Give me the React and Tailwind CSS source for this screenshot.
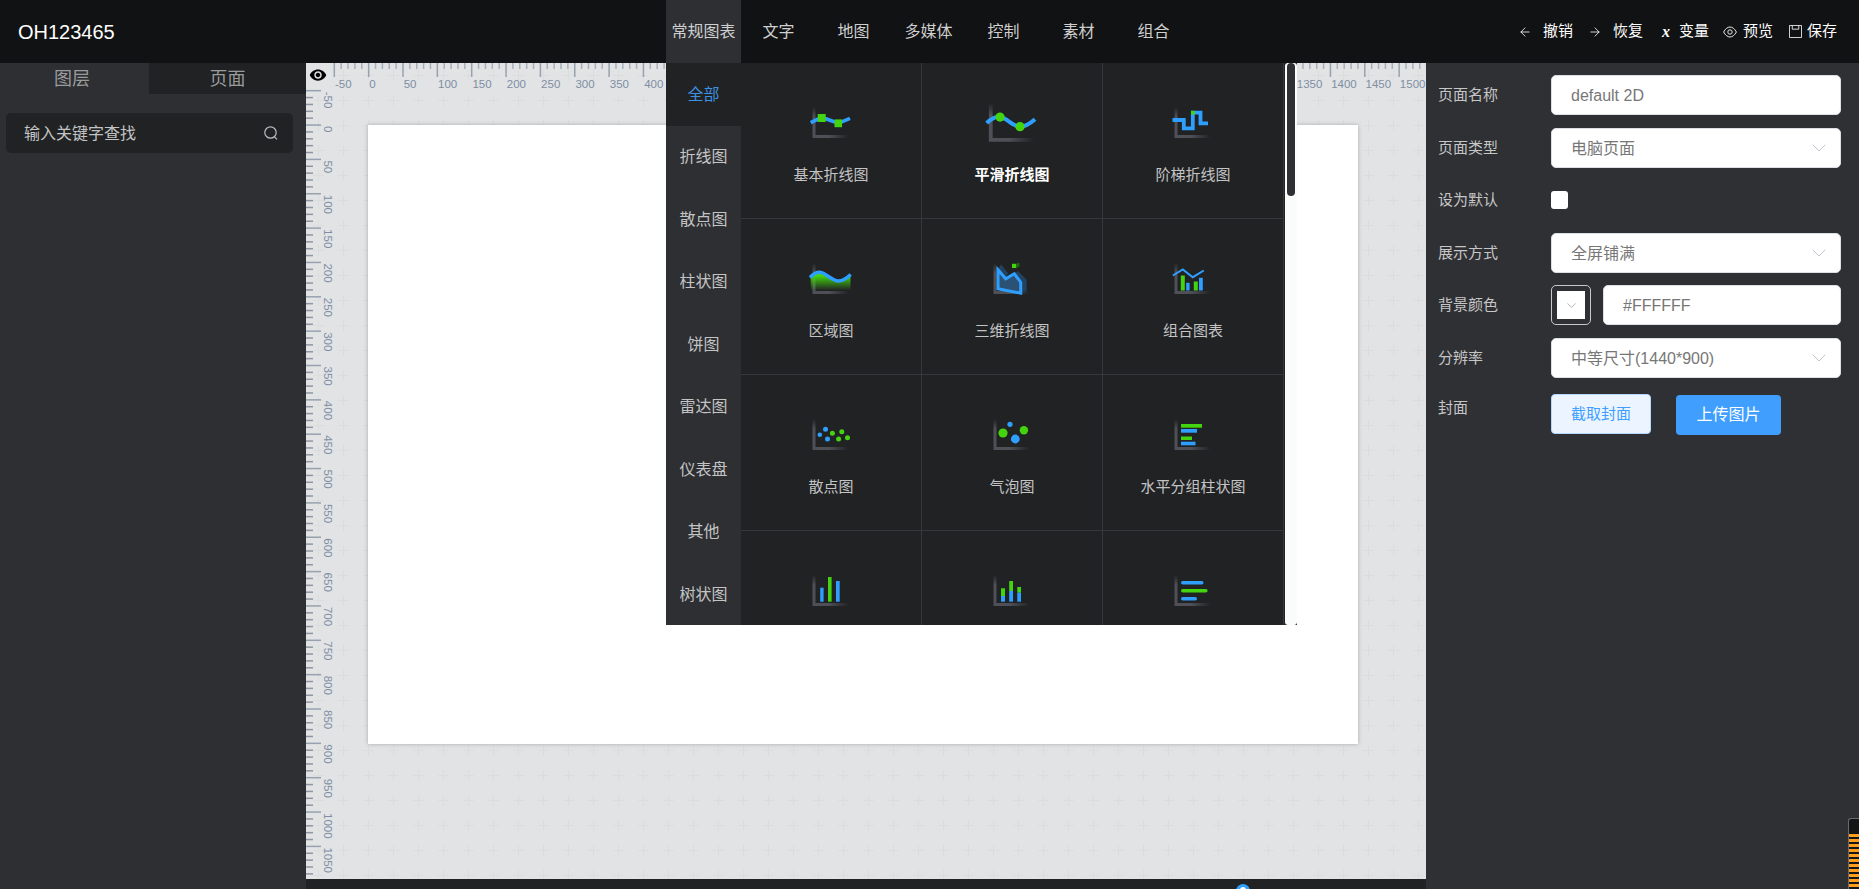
import { ArrowLeft, ArrowRight } from "lucide-react";
import { MdRemoveRedEye } from "react-icons/md";

const SANS = "font-['Liberation_Sans','Noto_Sans_CJK_SC',sans-serif]";
const BLUE = "#2f9fff";
const GREEN = "#43d40f";

const navItems = ["常规图表", "文字", "地图", "多媒体", "控制", "素材", "组合"];
const sideItems = ["全部", "折线图", "散点图", "柱状图", "饼图", "雷达图", "仪表盘", "其他", "树状图"];

const PX_PER_50 = 34.35;

function Axes() {
  return (
    <>
      <defs>
        <linearGradient id="axisV" x1="0" y1="0" x2="0" y2="1">
          <stop offset="0" stopColor="#4f5057" stopOpacity="0" />
          <stop offset="0.35" stopColor="#4f5057" />
        </linearGradient>
        <linearGradient id="axisH" x1="0" y1="0" x2="1" y2="0">
          <stop offset="0.45" stopColor="#4f5057" />
          <stop offset="1" stopColor="#4f5057" stopOpacity="0" />
        </linearGradient>
        <linearGradient id="areaFill" x1="0" y1="0" x2="0" y2="1">
          <stop offset="0.2" stopColor={GREEN} />
          <stop offset="1" stopColor={GREEN} stopOpacity="0" />
        </linearGradient>
      </defs>
      <rect x="5.5" y="8" width="3" height="28" fill="url(#axisV)" />
      <rect x="5.5" y="36" width="36" height="3" fill="url(#axisH)" />
    </>
  );
}

const icons = {
  line: (
    <>
      <path d="M3.7 23.7 14.7 18.3 31.3 24.3 43 19.3" fill="none" stroke={BLUE} strokeWidth="3.6" />
      <rect x="10.7" y="15" width="8" height="8" fill={GREEN} />
      <rect x="27.5" y="20.4" width="7.5" height="7.8" fill={GREEN} />
    </>
  ),
  smooth: (
    <>
      <path d="M3.7 24C8 20 11 18.500 14.400 19 20 20 25 27 30.400 27 35 27 39 24 42.400 21" fill="none" stroke={BLUE} strokeWidth="3.2" />
      <circle cx="14.4" cy="19.2" r="3.7" fill={GREEN} />
      <circle cx="30.4" cy="26.9" r="3.7" fill={GREEN} />
    </>
  ),
  step: (
    <>
      <path d="M3.500 21H14.800V29.300H23.800V13.700H31.500V24.300H39" fill="none" stroke={BLUE} strokeWidth="3.8" />
      <rect x="22" y="11.800" width="3.8" height="3.800" fill={GREEN} />
    </>
  ),
  area: (
    <>
      <path d="M3.500 22C7 18 10 17 13 17.200 19 18 25 26 31.300 26 36 26 40 23 43.500 20V35.500H4Z" fill="url(#areaFill)" />
      <path d="M3 22.500C7 18 10 17 13 17.200 19 18 25 26 31.300 26 36 26 40 23 43.700 19.500" fill="none" stroke={BLUE} strokeWidth="3.4" />
    </>
  ),
  line3d: (
    <>
      <path d="M10 14 13 9.500 20 18 17.700 23.800Z" fill="#24425e" />
      <path d="M26.300 18.800 30 16 38.700 24.800V35.500L32.700 38.200V27.200Z" fill="#24425e" />
      <path d="M10 14.800 17.700 23.800 26.300 18.800 32.700 27.200V38.200L10 33.800Z" fill="#2b5274" stroke={BLUE} strokeWidth="3" />
      <rect x="24" y="8.800" width="4.400" height="4.200" fill={GREEN} />
      <path d="M28.400 13V8.800L31.400 7.600V11.500Z" fill="#1f6b10" />
    </>
  ),
  combo: (
    <>
      <rect x="11.8" y="20.5" width="4" height="15" fill={GREEN} />
      <rect x="17.2" y="27.8" width="3.4" height="7.7" fill={BLUE} />
      <rect x="24.8" y="26.5" width="4" height="9" fill={GREEN} />
      <rect x="30" y="22.8" width="3.8" height="12.7" fill={BLUE} />
      <path d="M3.800 20.500 13.800 14.500 23.800 22.200 34.800 15.500" fill="none" stroke={BLUE} strokeWidth="2" />
    </>
  ),
  scatter: (
    <>
      <circle cx="12.8" cy="23.7" r="2.3" fill={BLUE} />
      <circle cx="18.5" cy="18.3" r="2.5" fill={BLUE} />
      <circle cx="20.5" cy="28" r="2.5" fill={BLUE} />
      <circle cx="25.4" cy="22.3" r="2.5" fill={GREEN} />
      <circle cx="31.6" cy="28" r="2.5" fill={GREEN} />
      <circle cx="34.8" cy="20.7" r="2.5" fill={GREEN} />
      <circle cx="40.5" cy="26.7" r="2.5" fill={GREEN} />
    </>
  ),
  bubble: (
    <>
      <circle cx="15" cy="22" r="4.6" fill={GREEN} />
      <circle cx="27.3" cy="28" r="4.4" fill={BLUE} />
      <circle cx="35.9" cy="19.3" r="4.2" fill={GREEN} />
      <circle cx="22" cy="13.3" r="2.6" fill={BLUE} />
    </>
  ),
  hgroup: (
    <>
      <rect x="12" y="13" width="21" height="3.7" fill={GREEN} />
      <rect x="12" y="18" width="16" height="3.7" fill={BLUE} />
      <rect x="12" y="25.5" width="11" height="3.5" fill={GREEN} />
      <rect x="12" y="30.7" width="14.5" height="3.6" fill={BLUE} />
    </>
  ),
  vbar: (
    <>
      <rect x="13.2" y="20.7" width="3.4" height="14" fill={BLUE} />
      <rect x="21" y="10" width="3.6" height="24.7" fill={GREEN} />
      <rect x="29" y="14" width="3.7" height="20.7" fill={BLUE} />
    </>
  ),
  vstack: (
    <>
      <rect x="13" y="21.3" width="4" height="7.7" fill={GREEN} />
      <rect x="13" y="29" width="4" height="5.7" fill={BLUE} />
      <rect x="21.2" y="14" width="3.8" height="10" fill={GREEN} />
      <rect x="21.2" y="24" width="3.8" height="10.7" fill={BLUE} />
      <rect x="29.3" y="20" width="3.7" height="5.7" fill={GREEN} />
      <rect x="29.3" y="25.7" width="3.7" height="9" fill={BLUE} />
    </>
  ),
  hround: (
    <>
      <rect x="12" y="14" width="22.5" height="3.4" rx="1.7" fill={BLUE} />
      <rect x="12" y="22" width="26.6" height="3.6" rx="1.8" fill={GREEN} />
      <rect x="12" y="30" width="16" height="3.6" rx="1.8" fill={BLUE} />
    </>
  ),
};

const charts = [
  { icon: "line", label: "基本折线图" },
  { icon: "smooth", label: "平滑折线图", hover: true },
  { icon: "step", label: "阶梯折线图" },
  { icon: "area", label: "区域图" },
  { icon: "line3d", label: "三维折线图" },
  { icon: "combo", label: "组合图表" },
  { icon: "scatter", label: "散点图" },
  { icon: "bubble", label: "气泡图" },
  { icon: "hgroup", label: "水平分组柱状图" },
  { icon: "vbar", label: "" },
  { icon: "vstack", label: "" },
  { icon: "hround", label: "" },
];

function ChartCell({ icon, label, hover }) {
  return (
    <div className="h-[156px] shrink-0 border-r border-b border-[#36383c] flex flex-col items-center pt-[36px]">
      <svg viewBox="0 0 48 48" className={`w-12 h-12 shrink-0 overflow-visible ${hover ? "scale-125" : ""}`}>
        <Axes />
        {icons[icon]}
      </svg>
      <span className={`mt-[17px] text-[15px] leading-[22px] ${hover ? "font-bold text-white" : "text-[#c4c4c4]"}`}>
        {label}
      </span>
    </div>
  );
}

function Chevron({ className, color = "#c0c4cc" }) {
  return (
    <svg viewBox="0 0 14 8" className={className} fill="none" stroke={color} strokeWidth="1">
      <path d="M.7.7 7 7 13.300.7" />
    </svg>
  );
}

function Field({ label, children, className = "" }) {
  return (
    <div className={`flex items-center ${className}`}>
      <span className="w-[113px] shrink-0 text-[15px] text-[#c6c6c6]">{label}</span>
      {children}
    </div>
  );
}

function Box({ children, arrow, className = "w-[290px]" }) {
  return (
    <div className={`h-10 shrink-0 bg-white rounded-[5px] border border-[#dcdfe6] flex items-center justify-between pl-[19px] pr-[14px] text-base text-[#777] ${className}`}>
      <span className="pt-px">{children}</span>
      {arrow && <Chevron className="w-[14px] h-2" />}
    </div>
  );
}

function Rulers() {
  const topTicks = [];
  for (let i = 0; i < 33 * 5; i++) {
    const x = 28.3 + (i * PX_PER_50) / 5;
    const major = i % 5 === 0;
    topTicks.push(
      <rect key={i} x={x - 0.75} y="0" width="1.5" height={major ? 14 : 6} fill={major ? "#98a2af" : "#a8b0bb"} />
    );
  }
  const leftTicks = [];
  for (let i = 0; i < 23 * 5 + 1; i++) {
    const y = 27.7 + (i * PX_PER_50) / 5;
    const major = i % 5 === 0;
    leftTicks.push(
      <rect key={i} x="0" y={y - 0.75} width={major ? 15 : 7} height="1.5" fill={major ? "#98a2af" : "#8e97a3"} />
    );
  }
  const labels = Array.from({ length: 32 }, (_, i) => (i - 1) * 50);
  const leftLabels = Array.from({ length: 23 }, (_, i) => (i - 1) * 50);

  return (
    <svg className="absolute inset-0 w-full h-full font-['Liberation_Sans',sans-serif]">
      <defs>
        <pattern id="grid" x="25" y="25" width="25" height="25" patternUnits="userSpaceOnUse">
          <path d="M7 12.500H18M12.500 7V18" stroke="#dadcde" strokeWidth="1" />
        </pattern>
      </defs>
      <rect width="100%" height="100%" fill="url(#grid)" />
      {topTicks}
      {leftTicks}
      {labels.map((n, i) => (
        <text key={n} x={29 + i * PX_PER_50} y="24.5" fontSize="11.5" fill="#7f8ea2">
          {n}
        </text>
      ))}
      {leftLabels.map((n, i) => {
        const y = 28.7 + i * PX_PER_50;
        return (
          <text key={n} x="18" y={y} fontSize="11.5" fill="#7f8ea2" transform={`rotate(90 18 ${y})`}>
            {n}
          </text>
        );
      })}
    </svg>
  );
}

export default function App() {
  return (
    <div className={`relative w-full h-screen overflow-hidden flex flex-col bg-[#2f3034] ${SANS}`}>
      {/* top bar */}
      <header className="h-[63px] shrink-0 bg-[#111213] flex items-center">
        <div className="w-[666px] shrink-0 pl-[18px] text-xl text-white">OH123465</div>
        <nav className="flex h-full">
          {navItems.map((item, i) => (
            <div
              key={item}
              className={`w-[75px] flex items-center justify-center text-base text-[#cfcfcf] ${i === 0 ? "bg-[#2d2f33]" : ""}`}
            >
              {item}
            </div>
          ))}
        </nav>
        <div className="ml-auto pr-[22px] flex items-center text-[15px] text-white">
          <ArrowLeft size={14} strokeWidth={1.4} className="mr-[11px]" />
          <span className="mr-[15px]">撤销</span>
          <ArrowRight size={14} strokeWidth={1.4} className="mr-[11px]" />
          <span className="mr-[19px]">恢复</span>
          <span className="mr-[9px] font-['Liberation_Serif',serif] italic font-bold text-base leading-none">x</span>
          <span className="mr-[14px]">变量</span>
          <svg viewBox="0 0 14 12" className="w-[14px] h-3 mr-[6px]" fill="none" stroke="#e8e8e8" strokeWidth="1">
            <path d="M.6 6C2.500 2.700 4.600 1 7 1s4.500 1.700 6.400 5C11.500 9.300 9.400 11 7 11S2.500 9.300.6 6Z" />
            <circle cx="7" cy="6" r="2.2" />
          </svg>
          <span className="mr-[16px]">预览</span>
          <svg viewBox="0 0 14 14" className="w-[13px] h-[13px] mr-[5px]" fill="none" stroke="#e8e8e8" strokeWidth="1">
            <path d="M.5.5H13.500V13.500H.5ZM3.500.5V4.500H10.500V.5" />
          </svg>
          <span>保存</span>
        </div>
      </header>

      <div className="flex-1 flex min-h-0">
        {/* layers panel */}
        <aside className="w-[306px] shrink-0 bg-[#2d2f33]">
          <div className="flex h-[31px] text-lg leading-[32px] text-[#9a9b9d]">
            <div className="w-[149px] pr-[5px] text-center">图层</div>
            <div className="flex-1 text-center bg-[#202224]">页面</div>
          </div>
          <div className="mt-[19px] mx-[6px] w-[287px] h-10 rounded-[5px] bg-[#202224] flex items-center justify-between pl-[18px] pr-[15px] text-base text-[#c4c4c4]">
            <span className="pt-px">输入关键字查找</span>
            <svg viewBox="0 0 14 14" className="w-[14px] h-[14px]" fill="none" stroke="#b9bdc4" strokeWidth="1.2">
              <circle cx="6.5" cy="6.5" r="5.7" />
              <path d="M10.500 10.800 13 13.300" />
            </svg>
          </div>
        </aside>

        {/* canvas */}
        <main className="flex-1 min-w-0 flex flex-col">
          <div className="relative flex-1 bg-[#e1e3e5] overflow-hidden">
            <Rulers />
            <MdRemoveRedEye size={18} className="absolute left-[3px] top-[3px] text-black" />
            <div className="absolute left-[62px] top-[62px] w-[990px] h-[619px] bg-white shadow-[0_0_4px_rgba(0,0,0,0.25)]" />
          </div>
          <div className="relative h-[10px] shrink-0 bg-[#202224] overflow-hidden">
            <div className="absolute left-[930px] top-[5px] w-[14px] h-[14px] rounded-full bg-[#2f9fff] flex items-start justify-center pt-[3px]">
              <div className="w-[6px] h-[6px] rounded-full bg-white" />
            </div>
          </div>
        </main>

        {/* page settings */}
        <aside className="w-[433px] shrink-0 bg-[#2f3034] pl-3 pt-3 flex flex-col">
          <Field label="页面名称">
            <Box>default 2D</Box>
          </Field>
          <Field label="页面类型" className="mt-[13px]">
            <Box arrow>电脑页面</Box>
          </Field>
          <Field label="设为默认" className="mt-[12px] h-[40px]">
            <div className="w-[17px] h-[18px] rounded-[3px] bg-white" />
          </Field>
          <Field label="展示方式" className="mt-[13px]">
            <Box arrow>全屏铺满</Box>
          </Field>
          <Field label="背景颜色" className="mt-3">
            <div className="w-10 h-10 shrink-0 rounded-[5px] border border-[#c8c8c8] p-[5px]">
              <div className="w-full h-full bg-white flex items-center justify-center">
                <Chevron className="w-[9px] h-[5px]" color="#888" />
              </div>
            </div>
            <Box className="w-[238px] ml-3">#FFFFFF</Box>
          </Field>
          <Field label="分辨率" className="mt-[13px]">
            <Box arrow>中等尺寸(1440*900)</Box>
          </Field>
          <div className="flex mt-4">
            <span className="w-[113px] shrink-0 mt-[3px] text-[15px] text-[#c6c6c6]">封面</span>
            <button className="w-[100px] h-10 rounded-[4px] bg-[#ecf5ff] border border-[#b3d8ff] text-[15px] text-[#409eff]">
              截取封面
            </button>
            <button className="ml-[25px] w-[105px] h-10 mt-px rounded-[4px] bg-[#409eff] text-base text-white">
              上传图片
            </button>
          </div>
        </aside>
      </div>

      {/* chart picker dropdown */}
      <div className="absolute left-[666px] top-[63px] w-[631px] h-[562px] flex overflow-hidden bg-[#202224]">
        <div className="w-[75px] shrink-0 bg-[#2d2f33] text-base text-[#c4c4c4]">
          {sideItems.map((item, i) => (
            <div
              key={item}
              className={`h-[62.5px] pt-px flex items-center justify-center ${i === 0 ? "bg-[#202224] text-[#3f90e0]" : ""}`}
            >
              {item}
            </div>
          ))}
        </div>
        <div className="w-[543px] shrink-0 h-full grid grid-cols-3 content-start">
          {charts.map((c) => (
            <ChartCell key={c.icon} {...c} />
          ))}
        </div>
        <div className="ml-[1px] w-3 h-full bg-[#fbfbfb] rounded-[3px] px-[2px]">
          <div className="w-2 h-[133px] rounded-full bg-[#2d2f33] ring-1 ring-white" />
        </div>
      </div>

      {/* fps meter in the corner */}
      <div className="absolute right-0 bottom-0 w-[11px] h-[71px] bg-[#141516] border-l border-t border-[#6a6a6a] rounded-tl-[3px] pt-[15px] overflow-hidden">
        {Array.from({ length: 11 }, (_, i) => (
          <div key={i} className="h-[3px] mb-[2px] bg-[#ff9d1e]" />
        ))}
      </div>
    </div>
  );
}
